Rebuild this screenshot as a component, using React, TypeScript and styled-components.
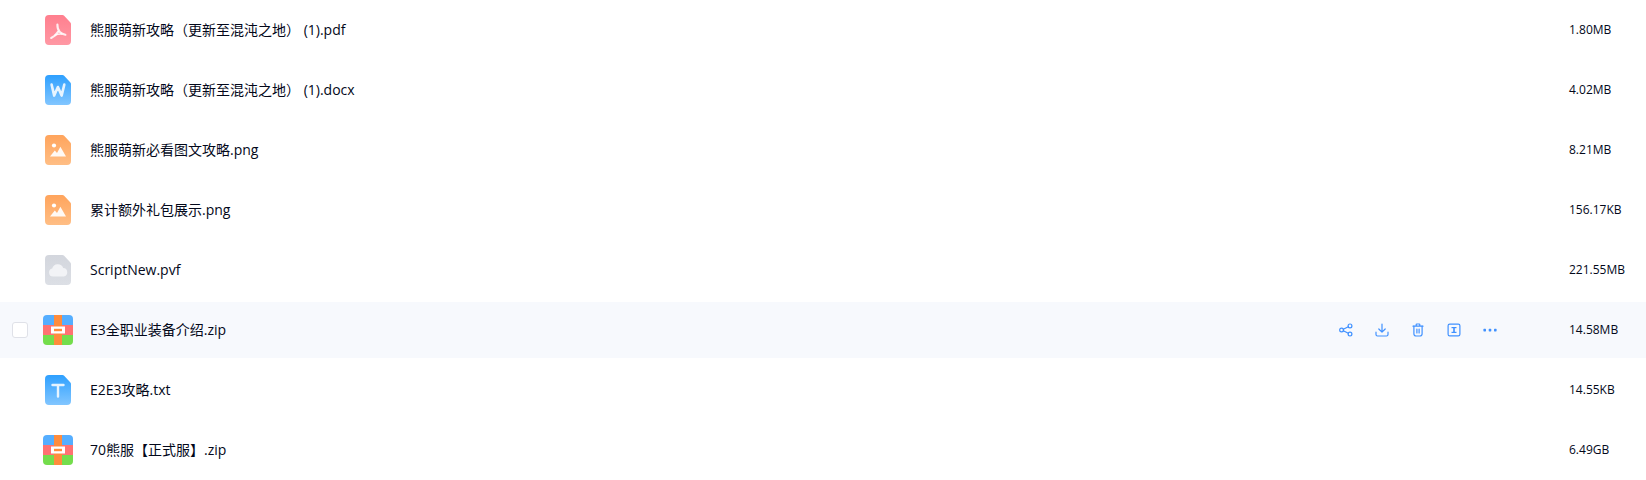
import React from 'react';
import styled, { createGlobalStyle } from 'styled-components';

const GlobalStyle = createGlobalStyle`
  html, body {
    margin: 0;
    padding: 0;
    background: #fff;
    overflow: hidden;
  }
  body {
    font-family: "Open Sans", "Noto Sans CJK SC", sans-serif;
  }
`;

const List = styled.div`
  display: flex;
  flex-direction: column;
  width: 1646px;
  height: 480px;
  overflow: hidden;
`;

const Row = styled.div<{ $active?: boolean }>`
  display: flex;
  flex: none;
  align-items: center;
  height: 56px;
  margin: 2px 0;
  padding-left: 12px;
  background: ${(p) => (p.$active ? '#f7f9fd' : 'transparent')};
`;

const CheckSlot = styled.div`
  flex: none;
  width: 16px;
  height: 16px;
  margin-right: 15px;
`;

const Checkbox = styled.div`
  box-sizing: border-box;
  width: 16px;
  height: 16px;
  background: #fff;
  border: 1px solid #dfe1e8;
  border-radius: 3px;
`;

const IconSlot = styled.div`
  display: flex;
  flex: none;
  align-items: center;
  justify-content: center;
  width: 30px;
  height: 30px;
  margin-right: 17px;
`;

const Name = styled.div`
  flex: 1;
  padding-bottom: 2px;
  font-size: 14px;
  color: #03081a;
  white-space: nowrap;
`;

const Actions = styled.div`
  display: flex;
  align-items: center;
  gap: 22px;
  margin-right: 72px;
  color: #4091ff;
`;

const Size = styled.div`
  flex: none;
  width: 77px;
  padding-bottom: 2px;
  font-size: 12px;
  color: #03081a;
`;

type Kind = 'pdf' | 'word' | 'image' | 'cloud' | 'zip' | 'text';

const gradients: Record<string, [string, string]> = {
  pdf: ['#ff7f8e', '#ff98a4'],
  word: ['#2ea0ff', '#82c6ff'],
  image: ['#ffa45c', '#ffbe85'],
  cloud: ['#d3d6dd', '#dcdfe5'],
  text: ['#2ea0ff', '#82c6ff'],
};

const DocIcon = ({ kind }: { kind: Exclude<Kind, 'zip'> }) => {
  const [from, to] = gradients[kind];
  const id = `grad-${kind}`;
  return (
    <svg width="26" height="30" viewBox="0 0 26 30">
      <defs>
        <linearGradient id={id} x1="0" y1="0" x2="0" y2="1">
          <stop offset="0" stopColor={from} />
          <stop offset="1" stopColor={to} />
        </linearGradient>
      </defs>
      <path
        d="M4 0h13.5a2 2 0 0 1 1.4.6l6.5 6.8a2 2 0 0 1 .6 1.4V26a4 4 0 0 1-4 4H4a4 4 0 0 1-4-4V4a4 4 0 0 1 4-4z"
        fill={`url(#${id})`}
      />
      {kind === 'pdf' && (
        <g fill="none" stroke="#fff" strokeOpacity="0.85" strokeWidth="2.1" strokeLinecap="round">
          <path d="M12.4 9.5c-.1 3 .6 5.6 2.4 7.4 1.4 1.4 3.4 2.4 5.6 2.8" />
          <path d="M6.2 23c2.6-1.2 5.2-3.4 7-6.4" />
          <path d="M9.8 20.2c2.2-.9 4.6-1.3 7-1.2" strokeWidth="1.4" />
        </g>
      )}
      {kind === 'word' && (
        <path
          d="M6.6 9.6l2.6 11 3.7-8.6 3.7 8.6 2.7-11"
          fill="none"
          stroke="#fff"
          strokeOpacity="0.85"
          strokeWidth="2.6"
          strokeLinejoin="round"
          strokeLinecap="round"
        />
      )}
      {kind === 'image' && (
        <>
          <circle cx="9" cy="10.5" r="2.1" fill="#fff" />
          <path d="M5 21.5l4.8-6 2.2 2.4 3.4-6.2 5.6 9.8z" fill="#fff" fillOpacity="0.92" />
        </>
      )}
      {kind === 'cloud' && (
        <path
          d="M8 21.5a4 4 0 0 1-.8-7.9 5.8 5.8 0 0 1 11-.6 4.3 4.3 0 0 1 .6 8.5z"
          fill="#f2f3f6"
        />
      )}
      {kind === 'text' && (
        <path d="M7.5 10h11M13 10v11.5" fill="none" stroke="#fff" strokeOpacity="0.85" strokeWidth="2.4" strokeLinecap="round" />
      )}
    </svg>
  );
};

const ZipIcon = () => (
  <svg width="30" height="30" viewBox="0 0 30 30">
    <defs>
      <clipPath id="zip-clip">
        <rect width="30" height="30" rx="4" />
      </clipPath>
    </defs>
    <g clipPath="url(#zip-clip)">
      <rect width="30" height="10" fill="#55aeff" />
      <rect y="10" width="30" height="10" fill="#ff7272" />
      <rect y="20" width="30" height="10" fill="#74dd4c" />
      <rect x="11" width="8" height="30" fill="#ff8c3c" />
      <rect x="8" y="11.5" width="14" height="7" fill="#fff" />
      <rect x="11" y="13.8" width="8" height="2.4" fill="#ff8c3c" />
    </g>
  </svg>
);

const FileIcon = ({ kind }: { kind: Kind }) =>
  kind === 'zip' ? <ZipIcon /> : <DocIcon kind={kind} />;

const ActionIcon = styled.svg.attrs({
  width: 14,
  height: 14,
  viewBox: '0 0 14 14',
  fill: 'none',
  stroke: 'currentColor',
  strokeWidth: 1.2,
  strokeLinecap: 'round',
  strokeLinejoin: 'round',
})`
  display: block;
  flex: none;
`;

const RowActions = () => (
  <Actions>
    <ActionIcon>
      <circle cx="2.6" cy="7" r="1.9" />
      <circle cx="11" cy="2.9" r="1.9" />
      <circle cx="11" cy="11.1" r="1.9" />
      <path d="M4.3 6.2l5-2.5M4.3 7.8l5 2.5" />
    </ActionIcon>
    <ActionIcon>
      <path d="M7 1v8M3.8 6l3.2 3.2L10.2 6" />
      <path d="M1 9.2v2.3c0 .9.7 1.5 1.5 1.5h9c.8 0 1.5-.6 1.5-1.5V9.2" />
    </ActionIcon>
    <ActionIcon>
      <path d="M2 3.2h10M5.2 3V1.6c0-.3.2-.6.6-.6h2.4c.4 0 .6.3.6.6V3" />
      <path d="M2.9 3.2v7.6c0 1.3 1 2.2 2.2 2.2h3.8c1.2 0 2.2-.9 2.2-2.2V3.2" />
      <path d="M5.9 6v4M8.1 6v4" />
    </ActionIcon>
    <ActionIcon>
      <rect x="1.1" y="1.1" width="11.8" height="11.8" rx="1.6" />
      <g fill="currentColor" stroke="none">
        <rect x="4.5" y="4" width="5" height="1.2" />
        <rect x="6.2" y="4" width="1.6" height="6" />
        <rect x="4.5" y="8.8" width="5" height="1.2" />
      </g>
    </ActionIcon>
    <ActionIcon>
      <g fill="currentColor" stroke="none">
        <rect x="0.4" y="5.8" width="2.6" height="2.6" rx="0.6" />
        <rect x="5.7" y="5.8" width="2.6" height="2.6" rx="0.6" />
        <rect x="11" y="5.8" width="2.6" height="2.6" rx="0.6" />
      </g>
    </ActionIcon>
  </Actions>
);

const files: { name: string; size: string; kind: Kind; active?: boolean }[] = [
  { name: '熊服萌新攻略（更新至混沌之地） (1).pdf', size: '1.80MB', kind: 'pdf' },
  { name: '熊服萌新攻略（更新至混沌之地） (1).docx', size: '4.02MB', kind: 'word' },
  { name: '熊服萌新必看图文攻略.png', size: '8.21MB', kind: 'image' },
  { name: '累计额外礼包展示.png', size: '156.17KB', kind: 'image' },
  { name: 'ScriptNew.pvf', size: '221.55MB', kind: 'cloud' },
  { name: 'E3全职业装备介绍.zip', size: '14.58MB', kind: 'zip', active: true },
  { name: 'E2E3攻略.txt', size: '14.55KB', kind: 'text' },
  { name: '70熊服【正式服】.zip', size: '6.49GB', kind: 'zip' },
];

export default function App() {
  return (
    <>
      <GlobalStyle />
      <List>
        {files.map((file) => (
          <Row key={file.name} $active={file.active}>
            <CheckSlot>{file.active && <Checkbox />}</CheckSlot>
            <IconSlot>
              <FileIcon kind={file.kind} />
            </IconSlot>
            <Name>{file.name}</Name>
            {file.active && <RowActions />}
            <Size>{file.size}</Size>
          </Row>
        ))}
      </List>
    </>
  );
}
